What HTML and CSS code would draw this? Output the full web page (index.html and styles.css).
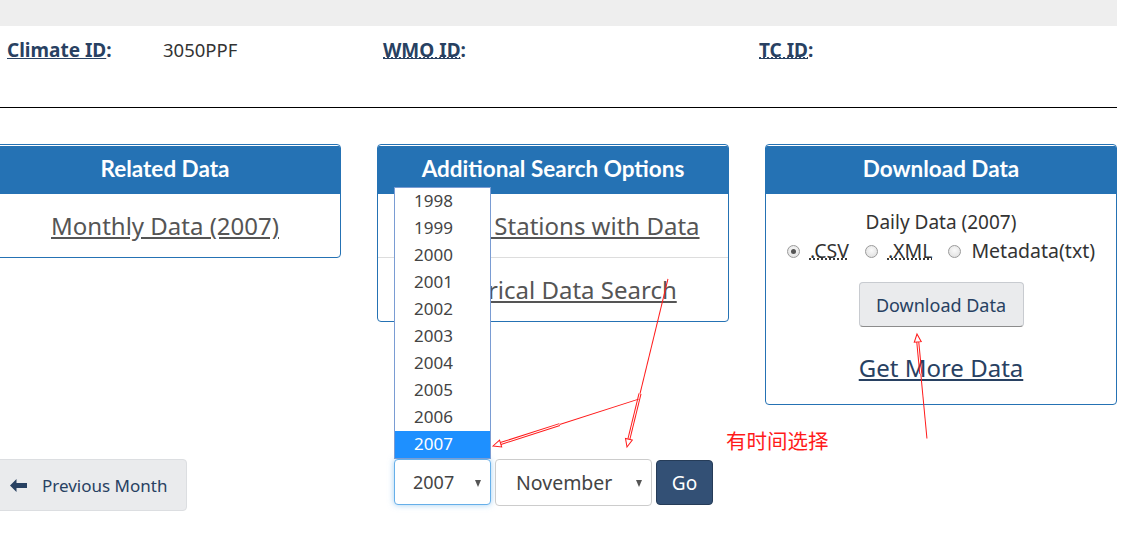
FILE: index.html
```html
<!DOCTYPE html>
<html lang="en">
<head>
<meta charset="utf-8">
<title>Daily Data Report</title>
<link rel="stylesheet" href="styles.css">
</head>
<body>
<div class="page">
  <div class="topbar"></div>
  <div class="ids">
    <div class="id-cell"><a class="id-link" href="#">Climate ID</a>:</div>
    <div class="id-val">3050PPF</div>
    <div class="id-cell"><a class="id-link" href="#"><abbr title="World Meteorological Organization">WMO ID</abbr></a>:</div>
    <div class="id-cell"><a class="id-link" href="#"><abbr title="Transport Canada">TC ID</abbr></a>:</div>
  </div>
  <hr class="rule">

  <div class="panels">
    <section class="panel">
      <h3 class="panel-head">Related Data</h3>
      <div class="panel-item"><a class="item-link" href="#">Monthly Data (2007)</a></div>
    </section>
    <section class="panel">
      <h3 class="panel-head">Additional Search Options</h3>
      <div class="panel-item"><a class="item-link" href="#">Nearby Stations with Data</a></div>
      <div class="panel-item sep"><a class="item-link" href="#">Historical Data Search</a></div>
    </section>
    <section class="panel">
      <h3 class="panel-head">Download Data</h3>
      <div class="dl-body">
        <div class="dl-title">Daily Data (2007)</div>
        <div class="radios">
          <label class="radio"><span class="dot checked"></span><abbr class="fmt">.CSV</abbr></label>
          <label class="radio"><span class="dot"></span><abbr class="fmt">.XML</abbr></label>
          <label class="radio"><span class="dot"></span>Metadata(txt)</label>
        </div>
        <button class="dl-btn" type="button">Download Data</button>
        <a class="more-link" href="#">Get More Data</a>
      </div>
    </section>
  </div>

  <div class="nav-row">
    <a class="prev-btn" href="#">
      <svg class="prev-icon" width="17" height="13" viewBox="0 0 17 13"><path d="M0 6.5 L6.5 0 L6.5 4 L17 4 L17 9 L6.5 9 L6.5 13 Z" fill="#284162"/></svg>
      <span>Previous Month</span>
    </a>
    <div class="date-form">
      <div class="year-wrap">
        <ul class="year-list">
          <li>1998</li><li>1999</li><li>2000</li><li>2001</li><li>2002</li>
          <li>2003</li><li>2004</li><li>2005</li><li>2006</li><li class="sel">2007</li>
        </ul>
        <div class="fake-select year focus">2007<span class="caret"></span></div>
      </div>
      <div class="fake-select month">November<span class="caret"></span></div>
      <button class="go-btn" type="button">Go</button>
    </div>
  </div>

  <svg class="annot" width="1133" height="547" viewBox="0 0 1133 547">
    <g fill="none" stroke="#ff1a1a" stroke-width="1">
      <g transform="translate(627 447) rotate(103.7)">
        <line x1="-173" y1="0" x2="-55" y2="0"/>
        <line x1="-55" y1="-1" x2="-8" y2="-1"/>
        <line x1="-55" y1="1" x2="-8" y2="1"/>
        <polygon points="0,0 -8,-3.5 -8,3.5"/>
      </g>
      <g transform="translate(493 446) rotate(162.16)">
        <line x1="-153" y1="0" x2="-70" y2="0"/>
        <line x1="-70" y1="-1" x2="-8" y2="-1"/>
        <line x1="-70" y1="1" x2="-8" y2="1"/>
        <polygon points="0,0 -8,-3.5 -8,3.5"/>
      </g>
      <g transform="translate(917 334) rotate(-95.44)">
        <line x1="-105" y1="0" x2="-40" y2="0"/>
        <line x1="-40" y1="-1" x2="-8" y2="-1"/>
        <line x1="-40" y1="1" x2="-8" y2="1"/>
        <polygon points="0,0 -8,-3.5 -8,3.5"/>
      </g>
    </g>
  </svg>
  <div class="annot-text">有时间选择</div>
</div>
</body>
</html>
```

FILE: styles.css
```css
* { box-sizing: border-box; }

html, body {
  margin: 0;
  padding: 0;
  background: #fff;
}

body {
  font-family: "Noto Sans", "Open Sans", sans-serif;
  color: #333;
  overflow: hidden;
}

.page {
  position: relative;
  width: 1133px;
  height: 547px;
}

.topbar {
  width: 1117px;
  height: 26px;
  background: #eeeeee;
}

.ids {
  width: 1117px;
  height: 81px;
  padding: 11px 0 0 7px;
  display: grid;
  grid-template-columns: 156px 220px 376px 1fr;
  font-size: 18.5px;
  line-height: 26px;
  align-items: start;
}

.id-cell {
  font-weight: bold;
  font-size: 19px;
  color: #284162;
}

.id-link {
  color: #284162;
  text-decoration: underline;
}

.id-link abbr {
  text-decoration: underline dotted;
}

.id-val {
  color: #333;
}

.rule {
  width: 1117px;
  margin: 0;
  border: 0;
  border-top: 1px solid #000;
  height: 0;
}

.panels {
  margin: 36px 0 0 -11px;
  display: grid;
  grid-template-columns: 352px 352px 352px;
  column-gap: 36px;
  align-items: start;
}

.panel {
  border: 1px solid #2572b4;
  border-radius: 4px;
  overflow: hidden;
  background: #fff;
}

.panel-head {
  margin: 1px 0 0;
  height: 48px;
  background: #2572b4;
  color: #fff;
  font-family: Lato, "Noto Sans", sans-serif;
  font-weight: bold;
  font-size: 22.5px;
  line-height: 45px;
  text-align: center;
}

.panel-item {
  height: 63px;
  display: flex;
  align-items: center;
  justify-content: center;
  font-size: 24px;
}

.panel-item.sep {
  height: 64px;
  border-top: 1px solid #ddd;
}

.item-link {
  color: #555;
  text-decoration: underline;
}

.dl-body {
  height: 210px;
  display: flex;
  flex-direction: column;
  align-items: center;
  padding-top: 15px;
}

.dl-title {
  font-size: 19px;
  line-height: 26px;
  color: #333;
}

.radios {
  margin-top: 3px;
  display: flex;
  gap: 16px;
  font-size: 19.5px;
  line-height: 26px;
}

.radio {
  display: flex;
  align-items: center;
  gap: 10px;
}

.dot {
  width: 13px;
  height: 13px;
  border-radius: 50%;
  border: 1px solid #9a9a9a;
  background: radial-gradient(circle at 50% 40%, #fafafa 0%, #dcdcdc 100%);
  position: relative;
}

.dot.checked::after {
  content: "";
  position: absolute;
  left: 3px;
  top: 3px;
  width: 5px;
  height: 5px;
  border-radius: 50%;
  background: #555;
}

.fmt {
  text-decoration: underline dotted;
}

.dl-btn {
  margin-top: 18px;
  width: 165px;
  height: 45px;
  background: #eaebed;
  border: 1px solid #c8cbd0;
  border-bottom-color: #8c8c8c;
  border-radius: 4px;
  color: #284162;
  font-family: "Noto Sans", sans-serif;
  font-size: 18px;
}

.more-link {
  margin-top: 25px;
  font-size: 24px;
  line-height: 32px;
  color: #284162;
  text-decoration: underline;
}

.nav-row {
  margin: 54px 0 0 -11px;
  display: flex;
  align-items: flex-start;
}

.prev-btn {
  width: 198px;
  height: 52px;
  display: flex;
  align-items: center;
  gap: 15px;
  padding-left: 20px;
  background: #eaebed;
  border: 1px solid #dcdee1;
  border-radius: 4px;
  color: #284162;
  font-size: 17px;
  text-decoration: none;
}

.prev-icon {
  flex: none;
}

.date-form {
  margin-left: 207px;
  display: flex;
  align-items: flex-start;
  gap: 4px;
}

.year-wrap {
  position: relative;
}

.year-list {
  position: absolute;
  left: 0;
  bottom: 100%;
  margin: 0;
  padding: 0;
  list-style: none;
  width: 97px;
  background: #fff;
  border: 1px solid #7a9cd3;
  z-index: 2;
}

.year-list li {
  height: 27px;
  line-height: 26px;
  padding-left: 19px;
  font-size: 17px;
  color: #444;
}

.year-list li.sel {
  background: #1e90ff;
  color: #fff;
}

.fake-select {
  position: relative;
  background: #fff;
  border: 1px solid #ccc;
  border-radius: 4px;
  font-size: 18px;
  color: #444;
  display: flex;
  align-items: center;
}

.fake-select.year {
  width: 97px;
  height: 46px;
  padding-left: 18px;
}

.fake-select.focus {
  border-color: #66afe9;
  box-shadow: 0 0 6px rgba(102, 175, 233, 0.6);
}

.fake-select.month {
  width: 157px;
  height: 47px;
  padding-left: 20px;
  font-size: 19.5px;
}

.caret {
  position: absolute;
  right: 9px;
  top: 20px;
  width: 0;
  height: 0;
  border-left: 3.5px solid transparent;
  border-right: 3.5px solid transparent;
  border-top: 7px solid #555;
}

.go-btn {
  margin-top: 1px;
  width: 57px;
  height: 45px;
  background: #335075;
  border: 1px solid #263c58;
  border-radius: 4px;
  color: #fff;
  font-family: "Noto Sans", sans-serif;
  font-size: 19px;
}

.annot {
  position: absolute;
  left: 0;
  top: 0;
  pointer-events: none;
  z-index: 5;
}

.annot-text {
  position: absolute;
  left: 726px;
  top: 427px;
  font-family: "Noto Sans CJK SC", sans-serif;
  font-size: 20.5px;
  line-height: 26px;
  color: #ff1a1a;
  z-index: 5;
}
```
